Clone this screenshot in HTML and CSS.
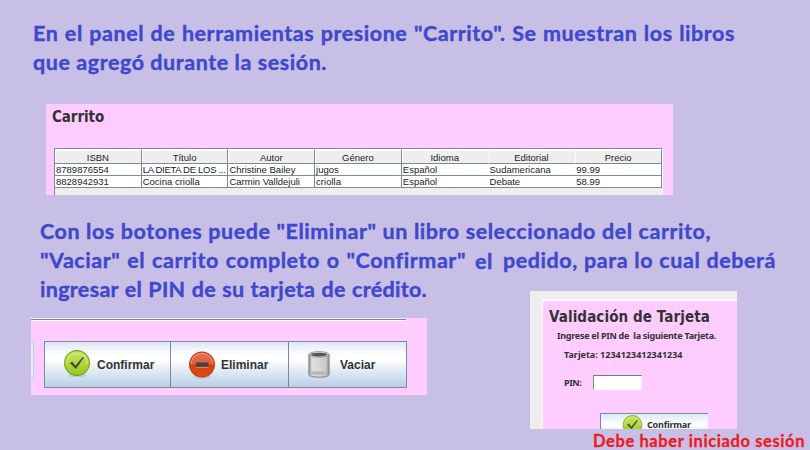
FILE: index.html
```html
<!DOCTYPE html>
<html lang="es">
<head>
<meta charset="utf-8">
<title>Carrito</title>
<link rel="stylesheet" href="styles.css">
</head>
<body>
<svg width="0" height="0" class="defs" aria-hidden="true">
  <defs>
    <linearGradient id="green" x1="0" y1="0" x2="0" y2="1"><stop offset="0" stop-color="#c9e36a"/><stop offset=".5" stop-color="#b4d63f"/><stop offset="1" stop-color="#96c81e"/></linearGradient>
    <linearGradient id="red" x1="0" y1="0" x2="0" y2="1"><stop offset="0" stop-color="#e5765a"/><stop offset=".48" stop-color="#dd5c36"/><stop offset=".52" stop-color="#d5420f"/><stop offset="1" stop-color="#dd4a12"/></linearGradient>
    <linearGradient id="metal" x1="0" y1="0" x2="1" y2="0"><stop offset="0" stop-color="#888"/><stop offset=".15" stop-color="#ddd"/><stop offset=".5" stop-color="#d6d6d6"/><stop offset=".85" stop-color="#c4c4c4"/><stop offset="1" stop-color="#888"/></linearGradient>
    <symbol id="check" viewBox="0 0 28 28">
      <ellipse cx="14" cy="25.5" rx="9" ry="1.6" fill="#788" opacity=".25"/>
      <circle cx="14" cy="13" r="12.4" fill="url(#green)" stroke="#76a51b" stroke-width="1.1"/>
      <path d="M3.5 14a10.5 10.5 0 0 1 21 0" fill="none" stroke="#d9ec94" stroke-width=".8"/>
      <path d="M7.3 13.2l1.8-1.4 3.3 4.2 7.2-8.6 1.2 0-8 11.3z" fill="#444a3c" stroke="#444a3c" stroke-width=".5"/>
    </symbol>
  </defs>
</svg>
<main class="slide">
  <p class="note first">
    <span class="line l1">En el panel de herramientas presione "Carrito". Se muestran los libros</span>
    <span class="line l2">que agregó durante la sesión.</span>
  </p>

  <section class="cart">
    <h2>Carrito</h2>
    <div class="scroll">
      <table>
        <thead><tr><th>ISBN</th><th>Título</th><th>Autor</th><th>Género</th><th class="open">Idioma</th><th class="open">Editorial</th><th>Precio</th></tr></thead>
        <tbody>
          <tr><td>8789876554</td><td class="tight">LA DIETA DE LOS ...</td><td>Christine Bailey</td><td>jugos</td><td class="open">Español</td><td class="open">Sudamericana</td><td>99.99</td></tr>
          <tr><td>8828942931</td><td>Cocina criolla</td><td>Carmin Valldejuli</td><td>criolla</td><td class="open">Español</td><td class="open">Debate</td><td>58.99</td></tr>
        </tbody>
      </table>
    </div>
  </section>

  <p class="note second">
    <span class="line l3">Con los botones puede "Eliminar" un libro seleccionado del carrito,</span>
    <span class="line l4"><span class="part p1">"Vaciar" el carrito completo o "Confirmar"</span><span class="el">el</span><span class="part p2">pedido, para lo cual deberá</span></span>
    <span class="line l5">ingresar el PIN de su tarjeta de crédito.</span>
  </p>

  <div class="row">
    <section class="actions">
      <div class="edge"></div>
      <div class="bar">
        <div class="stub"></div>
        <div class="buttons">
          <button class="confirm"><svg width="28" height="28"><use href="#check"/></svg>Confirmar</button>
          <button class="remove"><svg width="28" height="28" viewBox="0 0 28 28">
            <ellipse cx="14" cy="26" rx="9" ry="1.6" fill="#788" opacity=".25"/>
            <circle cx="14" cy="13.5" r="12.4" fill="url(#red)" stroke="#bd3c12" stroke-width="1.1"/>
            <path d="M3.2 13a10.8 10.8 0 0 1 21.6 0" fill="none" stroke="#efa08a" stroke-width=".8"/>
            <rect x="8" y="11.5" width="12.5" height="4.5" fill="#45413f"/><path d="M8 16.4h12.5" stroke="#f09a78" stroke-width=".8"/>
          </svg>Eliminar</button>
          <button class="empty"><svg width="22" height="28" viewBox="0 0 22 28">
            <ellipse cx="11" cy="25" rx="10.5" ry="2.2" fill="#788" opacity=".35"/>
            <path d="M.8 3.2v20c0 1.6 4 2.8 10.2 2.8s10.2-1.2 10.2-2.8v-20z" fill="url(#metal)" stroke="#858585" stroke-width=".8"/>
            <path d="M3 20.5h16v2.2c-3 1.6-13 1.6-16 0z" fill="#b8b8b8"/>
            <path d="M5.5 8v12M11 14v7M16 14v7" stroke="#e4e4e4" stroke-width=".4"/>
            <ellipse cx="11" cy="3.4" rx="10.2" ry="2.8" fill="#ddd" stroke="#8a8a8a" stroke-width=".8"/>
            <ellipse cx="11" cy="3.6" rx="8.3" ry="1.8" fill="#555"/>
          </svg>Vaciar</button>
        </div>
      </div>
    </section>

    <section class="dialog">
      <div class="sheet">
        <h2>Validación de Tarjeta</h2>
        <p class="hint">Ingrese el PIN de&nbsp; la siguiente Tarjeta.</p>
        <p class="card">Tarjeta: 1234123412341234</p>
        <label class="pin">PIN:<input type="text"></label>
        <button class="ok"><svg width="21" height="21"><use href="#check"/></svg>Confirmar</button>
      </div>
    </section>
  </div>
  <p class="warning">Debe haber iniciado sesión</p>
</main>
</body>
</html>
```
FILE: styles.css
```css
* { box-sizing: border-box; }
body { margin: 0; background: #c8bfe7; overflow: hidden; }
h2, p { margin: 0; }
.defs { position: absolute; }
.slide { width: 810px; height: 450px; overflow: hidden; display: flex; flex-direction: column; }

.note { font: bold 21.5px/29px Lato, sans-serif; letter-spacing: .55px; -webkit-text-stroke: .4px; color: #3f48cc; flex: none; }
.line, .part { display: block; white-space: nowrap; text-align: justify; text-align-last: justify; }
.first { margin: 19px 0 0 33px; }
.l1 { width: 702px; }
.l2 { width: 294px; }
.second { margin: 22px 0 0 40px; }
.l3 { width: 671px; }
.l4 { display: flex; width: 736px; }
.p1 { width: 426px; }
.el { padding: 1px 0 0; margin: 0 9px; width: 19px; height: 29px; }
.p2 { width: 273px; }
.l5 { width: 387px; letter-spacing: .3px; }

.cart { width: 627px; height: 91px; margin: 27px 0 0 46px; background: #fcf; overflow: hidden; flex: none; }
.cart h2 { font: bold 15px/20px "DejaVu Sans Condensed", "DejaVu Sans", sans-serif; font-stretch: condensed; letter-spacing: -.08px; color: #333; margin: 3px 0 21px 6px; }
.scroll { margin-left: 8px; width: 609px; height: 47px; border: 1px solid #7a8a99; border-width: 1px 0 0 1px; border-right: 1px solid #fff; background: #eee; }
table { border-collapse: separate; border-spacing: 0; table-layout: fixed; width: 607px; font: 9.5px/11px "Liberation Sans", sans-serif; color: #222; }
th, td { padding: 0; height: 12px; border: solid #7a8a99; border-width: 0 1px 1px 0; white-space: nowrap; overflow: hidden; font-weight: normal; }
th { height: 15px; background: #eee; border-top: 1px solid #fff; box-shadow: inset 1px 1px #fff; padding-top: 1px; }
td { background: #fff; padding-left: 1px; text-align: left; }
.tight { letter-spacing: -.3px; }
th.open { border-right-color: #eee; }
td.open { border-right-width: 0; }

.row { display: flex; align-items: flex-start; height: 138px; margin-top: -13px; flex: none; }
.actions { width: 396px; height: 77px; margin: 27px 0 0 31px; background: #fcf; }
.edge { width: 375px; height: 3px; background: #7a8a99; border-top: 1px solid #eee; border-bottom: 1px solid #fff; }
.bar { display: flex; padding-top: 20px; }
.stub { width: 3px; height: 38px; margin-right: 10px; background: #eee; border: 1px solid #b8cfe5; border-left: 0; }
.buttons { display: flex; width: 363px; height: 47px; border: 1px solid #7a8a99; }
button { display: flex; align-items: center; border: 0; padding: 0; color: #333; background: linear-gradient(#dde8f3, #fff 30%, #fff 38%, #b8cfe5); font: bold 12px/14px "Liberation Sans", sans-serif; }
button + button { border-left: 1px solid #7a8a99; }
.confirm { width: 125px; padding-left: 18px; gap: 6px; }
.remove { width: 118px; padding-left: 17px; gap: 5px; }
.empty { width: 118px; flex: 1; padding-left: 19px; gap: 10px; }
.confirm svg { margin-top: -2px; }

.dialog { width: 207px; height: 138px; margin-left: 103px; padding: 8px 0 0 12px; background: #eee; overflow: hidden; }
.sheet { height: 130px; background: #fcf; border: solid #fff; border-width: 2px 0 0 1px; color: #333; font: bold 9px/12px "Noto Sans", sans-serif; overflow: hidden; }
.sheet h2 { font: bold 15px/20px "DejaVu Sans Condensed", "DejaVu Sans", sans-serif; font-stretch: condensed; letter-spacing: .1px; margin: 6px 0 0 6px; white-space: nowrap; }
.hint { margin: 3px 0 0 14px; white-space: nowrap; letter-spacing: -.27px; }
.card { margin: 7px 0 0 21px; }
.pin { display: flex; align-items: center; margin: 14px 0 0 21px; letter-spacing: -.4px; }
input { width: 49px; height: 15px; margin-left: 12px; padding: 0; border: 1px solid; border-color: #777 #eee #fff #888; background: #fff; }
.ok { width: 108px; height: 22px; margin: 23px 0 0 57px; padding-left: 21px; gap: 4px; border: solid #7a8a99; border-width: 1px 0 0 1px; background: linear-gradient(#dde8f3, #fff 50%, #dce8f3); font: bold 9px/12px "Noto Sans", sans-serif; letter-spacing: -.2px; }
.ok svg { margin-top: 1px; }
.warning { width: 211px; margin-left: 593px; font: bold 16.5px/24px Lato, sans-serif; letter-spacing: .6px; -webkit-text-stroke: .3px; color: #ed1c24; white-space: nowrap; text-align-last: justify; }
```
